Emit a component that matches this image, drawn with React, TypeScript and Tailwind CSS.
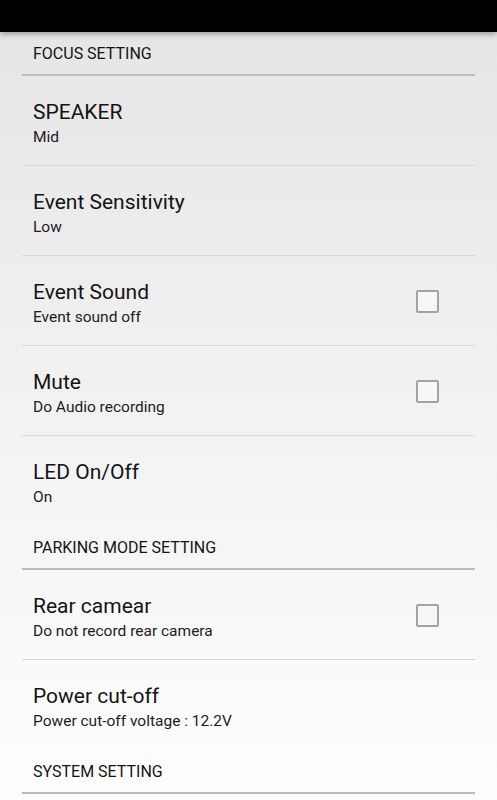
import React from 'react';

interface Item {
  title: string;
  sub: string;
  checkbox?: boolean;
}

interface Section {
  header: string;
  items: Item[];
}

const sections: Section[] = [
  {
    header: 'FOCUS SETTING',
    items: [
      { title: 'SPEAKER', sub: 'Mid' },
      { title: 'Event Sensitivity', sub: 'Low' },
      { title: 'Event Sound', sub: 'Event sound off', checkbox: true },
      { title: 'Mute', sub: 'Do Audio recording', checkbox: true },
      { title: 'LED On/Off', sub: 'On' },
    ],
  },
  {
    header: 'PARKING MODE SETTING',
    items: [
      { title: 'Rear camear', sub: 'Do not record rear camera', checkbox: true },
      { title: 'Power cut-off', sub: 'Power cut-off voltage : 12.2V' },
    ],
  },
  {
    header: 'SYSTEM SETTING',
    items: [],
  },
];

const SettingRow: React.FC<{ item: Item; last: boolean }> = ({ item, last }) => (
  <div
    className={`mx-[22px] h-[90px] px-[11px] flex justify-between ${
      last ? '' : 'border-b border-[#d8d8d8]'
    }`}
  >
    <div className="pt-[23px]">
      <div className="text-[21px] leading-[26px] text-[#141414]">{item.title}</div>
      <div className="text-[15.5px] leading-[24px] text-[#1c1c1c]">{item.sub}</div>
    </div>
    {item.checkbox && (
      <div className="self-center mt-[2px] mr-[25px] w-[23px] h-[23px] border-2 border-[#a3a3a3] rounded-[2px] bg-[#f7f7f7]" />
    )}
  </div>
);

export default function App() {
  return (
    <div
      className="h-[800px] overflow-hidden flex flex-col bg-white"
      style={{ fontFamily: 'Roboto, "Noto Sans", sans-serif' }}
    >
      <div className="h-[32px] bg-black shadow-[0_2px_6px_rgba(0,0,0,0.35)] z-10 shrink-0" />
      <div className="flex-1 bg-gradient-to-b from-[#e6e6e6] to-[#fefefe]">
        {sections.map((section) => (
          <div key={section.header}>
            <div className="mx-[22px] h-[44px] px-[11px] pt-[10px] leading-[24px] border-b-2 border-[#bcbcbc] text-[16px] text-[#141414]">
              {section.header}
            </div>
            {section.items.map((item, i) => (
              <SettingRow key={item.title} item={item} last={i === section.items.length - 1} />
            ))}
          </div>
        ))}
      </div>
    </div>
  );
}
